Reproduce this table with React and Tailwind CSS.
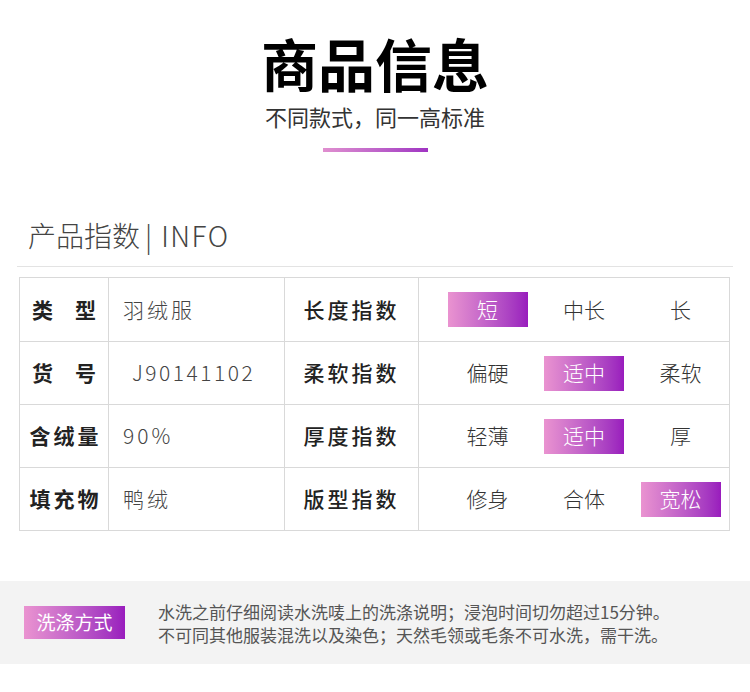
const rows = [
  { label: ['类', '型'], value: '羽绒服', index: '长度指数', options: ['短', '中长', '长'], active: 0 },
  { label: ['货', '号'], value: 'J90141102', index: '柔软指数', options: ['偏硬', '适中', '柔软'], active: 1, mono: true },
  { label: ['含绒量'], value: '90%', index: '厚度指数', options: ['轻薄', '适中', '厚'], active: 1 },
  { label: ['填充物'], value: '鸭绒', index: '版型指数', options: ['修身', '合体', '宽松'], active: 2 },
];

const font = { fontFamily: '"Noto Sans CJK SC", "Noto Sans", sans-serif' };

function Badge({ children, className = '' }) {
  return (
    <div
      className={`flex items-center justify-center bg-gradient-to-r from-[#ea93d0] to-[#991bbd] text-white ${className}`}
    >
      {children}
    </div>
  );
}

export default function App() {
  return (
    <div className="w-[750px] h-[692px] bg-white overflow-hidden text-[#333]" style={font}>
      <div className="flex flex-col items-center pt-[34px]">
        <h1 className="text-[57px] leading-[57px] font-bold text-black">商品信息</h1>
        <p className="mt-[14px] text-[22px] leading-[22px] text-[#333]">不同款式，同一高标准</p>
        <div className="mt-[21px] w-[105px] h-[4px] bg-gradient-to-r from-[#e08fcf] to-[#a033c2]" />
      </div>

      <div className="mt-[70px] pl-[28px] flex items-center text-[28px] leading-[27px] font-light text-[#444]">
        <span>产品指数</span>
        <span className="ml-[5px]">|</span>
        <span className="ml-[9px] tracking-[1.5px]">INFO</span>
      </div>
      <div className="mt-[17px] ml-[17px] w-[716px] h-px bg-[#e3e3e3]" />

      <div className="mt-[10px] ml-[19px] w-[711px] border border-[#d9d9d9]">
        {rows.map((row, i) => (
          <div key={i} className={`flex h-[63px] ${i > 0 ? 'border-t border-[#d9d9d9]' : ''}`}>
            <div className="w-[89px] shrink-0 border-r border-[#d9d9d9] flex items-center justify-center gap-[19px] text-[21px] font-bold text-[#222] tracking-[3px] pl-[3px]">
              {row.label.map((l) => (
                <span key={l}>{l}</span>
              ))}
            </div>
            <div
              className={`w-[176px] shrink-0 border-r border-[#d9d9d9] flex items-center text-[21px] font-light text-[#444] ${
                row.mono ? 'pl-[23px] tracking-[2.5px]' : 'pl-[14px] tracking-[3px]'
              }`}
            >
              {row.value}
            </div>
            <div className="w-[134px] shrink-0 border-r border-[#d9d9d9] flex items-center justify-center text-[21px] font-medium text-[#222] tracking-[3px]">
              {row.index}
            </div>
            <div className="flex-1 pl-[20px] grid grid-cols-[97px_96px_97px] items-center text-[21px] font-light text-[#333]">
              {row.options.map((opt, j) => (
                <div key={j} className="flex justify-center">
                  {j === row.active ? (
                    <Badge className="w-[80px] h-[35px] text-[21px]">{opt}</Badge>
                  ) : (
                    <span>{opt}</span>
                  )}
                </div>
              ))}
            </div>
          </div>
        ))}
      </div>

      <div className="mt-[50px] h-[83px] bg-[#f3f3f3] flex items-center pl-[24px]">
        <Badge className="w-[101px] h-[33px] text-[19px]">洗涤方式</Badge>
        <div className="ml-[33px] text-[17px] leading-[23px] text-[#555]">
          <p>水洗之前仔细阅读水洗唛上的洗涤说明；浸泡时间切勿超过15分钟。</p>
          <p>不可同其他服装混洗以及染色；天然毛领或毛条不可水洗，需干洗。</p>
        </div>
      </div>
    </div>
  );
}
